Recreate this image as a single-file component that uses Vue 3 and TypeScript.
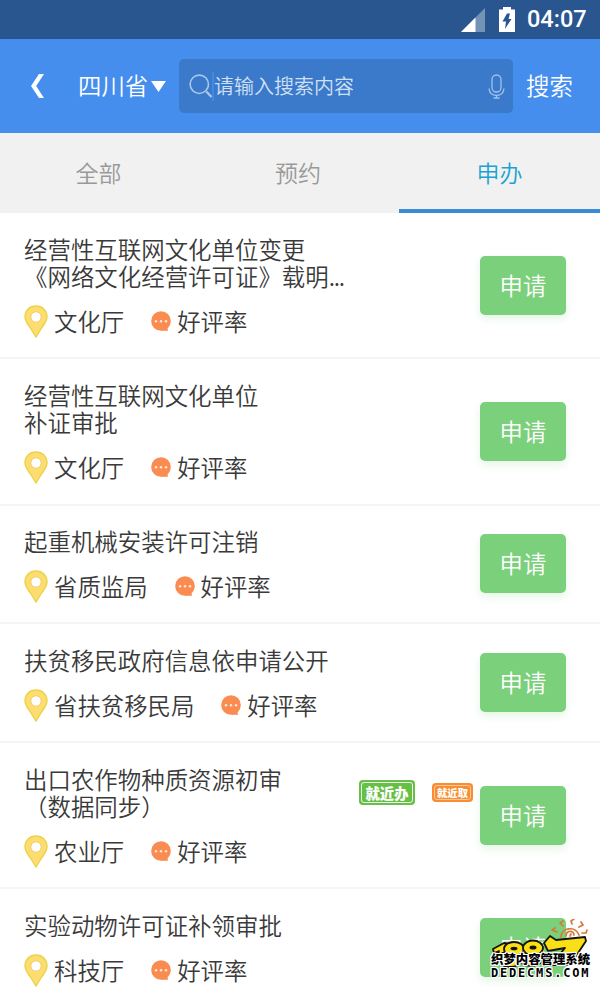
<script setup lang="ts">
interface Service {
  lines: string[]
  office: string
  truncated?: boolean
  nearby?: boolean
  watermark?: boolean
}

const tabs: string[] = ['全部', '预约', '申办']
const activeTab = '申办'

const services: Service[] = [
  { lines: ['经营性互联网文化单位变更', '《网络文化经营许可证》载明'], office: '文化厅', truncated: true },
  { lines: ['经营性互联网文化单位', '补证审批'], office: '文化厅' },
  { lines: ['起重机械安装许可注销'], office: '省质监局' },
  { lines: ['扶贫移民政府信息依申请公开'], office: '省扶贫移民局' },
  { lines: ['出口农作物种质资源初审', '（数据同步）'], office: '农业厅', nearby: true },
  { lines: ['实验动物许可证补领审批'], office: '科技厅', watermark: true },
]
</script>

<template>
  <div class="screen">
    <div class="status">
      <svg class="signal" width="24" height="24" viewBox="0 0 24 24">
        <path d="M24 0V24H0Z" fill="#7393b7" />
        <path d="M14.5 9.5V24H0Z" fill="#fff" />
      </svg>
      <svg class="battery" width="16" height="25" viewBox="0 0 16 25">
        <path d="M4 0H12V2.5H16V25H0V2.5H4Z" fill="#fff" />
        <path d="M8 6.5L3.5 14.5H7L6 22L12.5 12H9.5L11 6.5Z" fill="#29568f" />
      </svg>
      <span class="clock">04:07</span>
    </div>

    <header class="header">
      <svg class="back" width="14" height="24" viewBox="0 0 14 24">
        <path d="M9 0H14L6.2 12L14 24H9L1 12Z" fill="#fff" />
      </svg>
      <div class="region">
        <span class="label">四川省</span>
        <svg width="15" height="11" viewBox="0 0 15 11"><path d="M0 0H15L7.5 11Z" fill="#fff" /></svg>
      </div>
      <div class="search">
        <svg class="lens" width="24" height="24" viewBox="0 0 24 24" fill="none" stroke="#abc8ec" stroke-width="1.6">
          <circle cx="10.3" cy="10.3" r="9.2" />
          <path d="M17.3 17.5L22.5 23" stroke-width="2.2" />
        </svg>
        <span class="caret"></span>
        <span class="placeholder">请输入搜索内容</span>
        <svg class="mic" width="17" height="25" viewBox="0 0 17 25" fill="none" stroke="#a0c2ec" stroke-width="1.3">
          <rect x="4" y="1" width="9" height="17" rx="4.5" />
          <path d="M1 14.5C1.5 19.5 4 21.5 8.5 21.5S15.5 19.5 16 14.5M8.5 21.5V24M5.5 24H11.5" />
        </svg>
      </div>
      <span class="submit label">搜索</span>
    </header>

    <nav class="tabs">
      <div v-for="tab in tabs" :key="tab" class="tab" :class="{ active: tab === activeTab }">{{ tab }}</div>
    </nav>

    <main>
      <section v-for="service in services" :key="service.lines[0]" class="item">
        <div class="info">
          <div class="title" :class="{ truncated: service.truncated }">
            <div v-for="line in service.lines" :key="line" class="line">{{ line }}</div>
          </div>
          <div class="meta">
            <svg class="pin" width="24" height="33" viewBox="0 0 24 33">
              <path
                d="M12 1C5.7 1 1 5.7 1 11.7C1 16.5 4.5 20 7 24L12 32L17 24C19.5 20 23 16.5 23 11.7C23 5.7 18.3 1 12 1Z"
                fill="#fddc70" stroke="#ecd34c" stroke-width="1.4"
              />
              <circle cx="12" cy="12" r="5.2" fill="#fff" stroke="#efd067" stroke-width="1" />
            </svg>
            <span class="office">{{ service.office }}</span>
            <svg class="bubble" width="20" height="20" viewBox="0 0 20 20">
              <circle cx="10" cy="10" r="9.8" fill="#fb8c51" />
              <path d="M10 19.7H17.2L16 16Z" fill="#fb8c51" />
              <g fill="#ffe9dc"><circle cx="5" cy="10.3" r="1.2" /><circle cx="10" cy="10.3" r="1.2" /><circle cx="15" cy="10.3" r="1.2" /></g>
            </svg>
            <span>好评率</span>
          </div>
        </div>
        <div v-if="service.nearby" class="badges">
          <span class="badge green"><span>就近办</span></span>
          <span class="badge orange"><span>就近取</span></span>
        </div>
        <div class="apply">申请</div>
        <div v-if="service.watermark" class="watermark">
          <svg width="100" height="50" viewBox="0 0 100 50">
            <g fill="none" stroke="#d97838" stroke-width="1.7" stroke-linecap="round" stroke-linejoin="round">
              <path d="M70 18C70 9 84 6 88 16M75 17C75 11 83 11 83 16M79 17L80 15" />
              <path d="M66 13L61 11L64 9M72 7L69 4L72 2M81 5L80 2L83 0M88 8L92 6L90 3M91 14L95 14L96 11" />
            </g>
            <g fill="#f9df18" stroke="#171509" stroke-width="1.8" stroke-linejoin="round">
              <path d="M2 30L13 24L18 25L13 44H5L8 32L3 34Z" />
              <ellipse cx="19" cy="40" rx="11" ry="8" />
              <ellipse cx="23" cy="30" rx="10" ry="7" />
              <ellipse cx="40" cy="39" rx="12" ry="8" />
              <ellipse cx="42" cy="29" rx="10" ry="7.5" />
              <path d="M53 24L59 17L65 21L94 18L95 22L79 46H60L74 29L57 32Z" />
            </g>
            <g fill="#171509"><ellipse cx="23" cy="29.5" rx="3.5" ry="1.8" /><ellipse cx="42" cy="28.5" rx="3.5" ry="2" /></g>
          </svg>
          <div class="mark-name">织梦内容管理系统</div>
          <div class="mark-site">DEDECMS.COM</div>
        </div>
      </section>
    </main>
  </div>
</template>

<style>
body {
  margin: 0;
  overflow: hidden;
}
</style>

<style scoped>
.screen {
  width: 600px;
  height: 987px;
  overflow: hidden;
  background: #fff;
  color: #3a3a3a;
  font-family: 'Noto Sans CJK SC', sans-serif;
  font-size: 23.4px;
  font-weight: 350;
  white-space: nowrap;
}
.status {
  box-sizing: border-box;
  height: 39px;
  padding-right: 14px;
  display: flex;
  align-items: center;
  justify-content: flex-end;
  background: #29568f;
  color: #fff;
}
.signal {
  flex: none;
  margin-right: 14px;
}
.battery {
  flex: none;
  margin-right: 12px;
}
.clock {
  width: 59px;
  text-align: right;
  font: 500 23.5px/39px Roboto, sans-serif;
}
.header {
  height: 94px;
  display: flex;
  align-items: center;
  background: #458eed;
  color: #fff;
}
.label {
  padding-bottom: 2px;
}
.back {
  margin-left: 30px;
}
.region {
  width: 101px;
  margin-left: 34px;
  display: flex;
  align-items: center;
  gap: 3px;
}
.search {
  box-sizing: border-box;
  width: 334px;
  height: 54px;
  padding: 0 8px 0 10px;
  display: flex;
  align-items: center;
  background: #3b79ca;
  border-radius: 5px;
}
.caret {
  width: 2px;
  height: 29px;
  margin-left: -1px;
  background: #4389e4;
}
.placeholder {
  flex: 1;
  padding-bottom: 1px;
  font-size: 20px;
  color: #d0e0f5;
}
.submit {
  margin-left: 13px;
}
.tabs {
  height: 80px;
  display: grid;
  grid-template-columns: 197px 202px 201px;
  background: #f1f1f1;
}
.tab {
  box-sizing: border-box;
  height: 80px;
  line-height: 78px;
  text-align: center;
  font-size: 23px;
  color: #999;
}
.tab.active {
  color: #1ba3d2;
  border-bottom: 4px solid #3b8dd3;
}
.item {
  box-sizing: border-box;
  position: relative;
  display: flex;
  align-items: center;
  padding: 0 34px 0 24px;
  border-bottom: 2px solid #f5f5f5;
}
.info {
  flex: 1;
  padding: 22.5px 0 19.1px;
}
.title {
  font-size: 23.45px;
}
.line {
  height: 27.5px;
  line-height: 27.5px;
}
.truncated .line:last-child::after {
  content: '...';
  letter-spacing: -1.3px;
}
.meta {
  display: flex;
  align-items: center;
  height: 34px;
  margin-top: 13.7px;
}
.office {
  margin-left: 6px;
  margin-right: 27px;
}
.bubble {
  margin-right: 6px;
}
.apply {
  width: 86px;
  height: 59px;
  line-height: 59px;
  border-radius: 5px;
  text-align: center;
  color: #fff;
  background: #7bd07c;
  box-shadow: 0 4px 9px #7bd07c33;
}
.badges {
  display: flex;
  align-items: center;
  gap: 17px;
  margin: 0 7px 46px 0;
}
.badge {
  box-sizing: border-box;
  display: flex;
  padding: 2px;
  border-radius: 4px;
  color: #fff;
  font-weight: 900;
}
.badge span {
  flex: 1;
  display: flex;
  align-items: center;
  justify-content: center;
  border: 1px solid #e9f8e2;
  border-radius: 3px;
}
.green {
  width: 56px;
  height: 25px;
  background: #68bf48;
  font-size: 14.3px;
}
.orange {
  width: 41px;
  height: 19px;
  background: #f88d32;
  font-size: 10.3px;
}
.badge.orange span {
  border-color: #fcc79a;
}
.watermark {
  position: absolute;
  left: 491px;
  top: 30px;
  width: 100px;
  height: 66px;
}
.watermark svg {
  display: block;
}
.mark-name,
.mark-site {
  position: absolute;
  left: 0;
  color: #000;
  text-shadow: 1px 0 #fff, -1px 0 #fff, 0 1px #fff, 0 -1px #fff, 1px 1px #fff, -1px -1px #fff, 1px -1px #fff, -1px 1px #fff;
}
.mark-name {
  top: 32px;
  font-size: 12.4px;
  line-height: 16px;
  font-weight: 900;
}
.mark-site {
  top: 47px;
  font: 700 12px/14px 'DejaVu Sans Mono', monospace;
  letter-spacing: 1.8px;
}
</style>
